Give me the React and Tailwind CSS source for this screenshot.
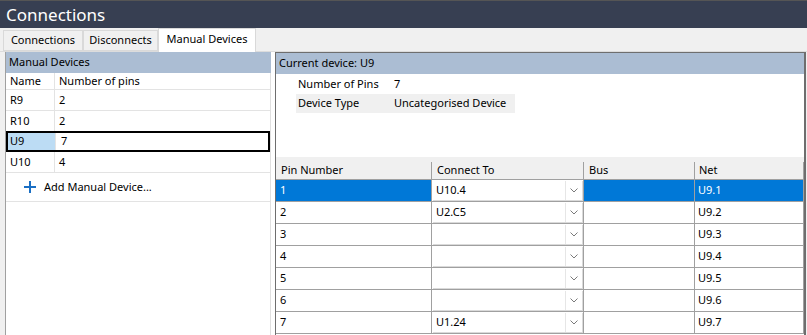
import React from "react";

const devices = [
  { name: "R9", pins: "2" },
  { name: "R10", pins: "2" },
  { name: "U9", pins: "7", selected: true },
  { name: "U10", pins: "4" },
];

const pinRows = [
  { pin: "1", to: "U10.4", net: "U9.1", selected: true },
  { pin: "2", to: "U2.C5", net: "U9.2" },
  { pin: "3", to: "", net: "U9.3" },
  { pin: "4", to: "", net: "U9.4" },
  { pin: "5", to: "", net: "U9.5" },
  { pin: "6", to: "", net: "U9.6" },
  { pin: "7", to: "U1.24", net: "U9.7" },
];

function Chevron() {
  return (
    <svg width="8" height="5" viewBox="0 0 8 5">
      <path d="M0.5 0.5 L4 4 L7.5 0.5" fill="none" stroke="#7a7a7a" strokeWidth="1" />
    </svg>
  );
}

function Tab({ label, active, width }) {
  if (active) {
    return (
      <div
        className={`${width} h-[24px] -mb-[1px] bg-white border border-b-0 border-[#d9d9d9] flex items-start justify-center pt-[2px]`}
      >
        {label}
      </div>
    );
  }
  return (
    <div
      className={`${width} h-[21px] bg-[#f0f0f0] border border-[#d9d9d9] flex items-center justify-center`}
    >
      {label}
    </div>
  );
}

function LeftPanel() {
  return (
    <div className="w-[270px] bg-white border-l border-[#a0a0a0] flex flex-col">
      <div className="w-[265px] h-[21px] bg-[#abbdd3] flex items-center pl-[3px]">
        Manual Devices
      </div>
      <div className="w-[265px] flex-1 border-r border-[#e0e0e0]">
        <div className="flex h-[17px] border-b border-[#e3e3e3]">
          <div className="w-[49px] pl-[4px] flex items-center border-r border-[#e3e3e3]">
            Name
          </div>
          <div className="pl-[4px] flex items-center">Number of pins</div>
        </div>
        {devices.map((d) =>
          d.selected ? (
            <div key={d.name} className="flex h-[21px] border-2 border-black -mt-[1px]">
              <div className="w-[47px] pl-[2px] bg-[#bcdcf4] flex items-center">
                {d.name}
              </div>
              <div className="pl-[5px] flex items-center border-l border-[#e3e3e3]">
                {d.pins}
              </div>
            </div>
          ) : (
            <div key={d.name} className="flex h-[21px] border-b border-[#e3e3e3]">
              <div className="w-[49px] pl-[4px] flex items-center border-r border-[#e3e3e3]">
                {d.name}
              </div>
              <div className="pl-[4px] flex items-center">{d.pins}</div>
            </div>
          )
        )}
        <div className="flex items-center h-[29px] border-b border-[#e3e3e3] pl-[18px] gap-[8px]">
          <svg width="12" height="12" viewBox="0 0 12 12">
            <path d="M6 0 V12 M0 6 H12" stroke="#1a6fc4" strokeWidth="2" />
          </svg>
          <span>Add Manual Device...</span>
        </div>
      </div>
    </div>
  );
}

function RightPanel() {
  return (
    <div className="w-[531px] bg-white border-l border-t border-r-2 border-[#6e6e6e] flex flex-col">
      <div className="h-[21px] bg-[#abbdd3] flex items-center pl-[3px]">
        Current device: U9
      </div>
      <div className="h-[83px] pt-[1px] pl-[20px]">
        <div className="w-[219px] flex h-[19px] items-center">
          <div className="w-[98px] pl-[2px]">Number of Pins</div>
          <div>7</div>
        </div>
        <div className="w-[219px] flex h-[19px] items-center bg-[#f0f0f0]">
          <div className="w-[98px] pl-[2px]">Device Type</div>
          <div>Uncategorised Device</div>
        </div>
      </div>
      <div className="h-[5px] bg-[#f0f0f0]" />
      <div className="flex-1">
        <div className="flex h-[18px] bg-[#f0f0f0] border-b border-[#a0a0a0]">
          <div className="w-[156px] pl-[5px] flex items-center border-r border-[#a0a0a0]">
            Pin Number
          </div>
          <div className="w-[152px] pl-[5px] flex items-center border-r border-[#a0a0a0]">
            Connect To
          </div>
          <div className="w-[111px] pl-[5px] flex items-center border-r border-[#a0a0a0]">
            Bus
          </div>
          <div className="w-[109px] pl-[4px] flex items-center border-r border-[#a0a0a0]">
            Net
          </div>
        </div>
        {pinRows.map((r) => (
          <div key={r.pin} className="flex h-[22px] border-b border-[#a0a0a0]">
            <div
              className={`w-[156px] pl-[4px] flex items-center border-r border-[#a0a0a0] ${
                r.selected ? "bg-[#0078d7] text-white" : ""
              }`}
            >
              {r.pin}
            </div>
            <div className="w-[152px] border-r border-[#a0a0a0] bg-white pt-[1px] pl-[1px]">
              <div className="h-full flex border-r border-b border-[#dadada]">
                <div className="flex-1 pl-[3px] flex items-center">{r.to}</div>
                <div className="w-[17px] border-l border-[#e6e6e6] flex items-center justify-center">
                  <Chevron />
                </div>
              </div>
            </div>
            <div
              className={`w-[111px] border-r border-[#a0a0a0] ${
                r.selected ? "bg-[#0078d7]" : ""
              }`}
            />
            <div
              className={`w-[109px] pl-[3px] flex items-center border-r border-[#a0a0a0] ${
                r.selected ? "bg-[#0078d7] text-white" : ""
              }`}
            >
              {r.net}
            </div>
          </div>
        ))}
      </div>
    </div>
  );
}

export default function App() {
  return (
    <div
      className="w-[807px] h-[335px] overflow-hidden bg-[#f0f0f0] text-[11px] text-black flex flex-col"
      style={{ fontFamily: '"Noto Sans", sans-serif' }}
    >
      <div className="h-[28px] shrink-0 bg-[#373f52] border-t border-[#555555] flex items-center pl-[6px] text-white text-[17px] leading-none">
        Connections
      </div>
      <div className="h-[24px] shrink-0 flex items-end pl-[3px] border-b border-[#dcdcdc]">
        <Tab label="Connections" width="w-[80px]" />
        <Tab label="Disconnects" width="w-[75px]" />
        <Tab label="Manual Devices" width="w-[98px]" active />
      </div>
      <div className="flex flex-1 pl-[5px] pr-[1px] min-h-0">
        <LeftPanel />
        <RightPanel />
      </div>
    </div>
  );
}
